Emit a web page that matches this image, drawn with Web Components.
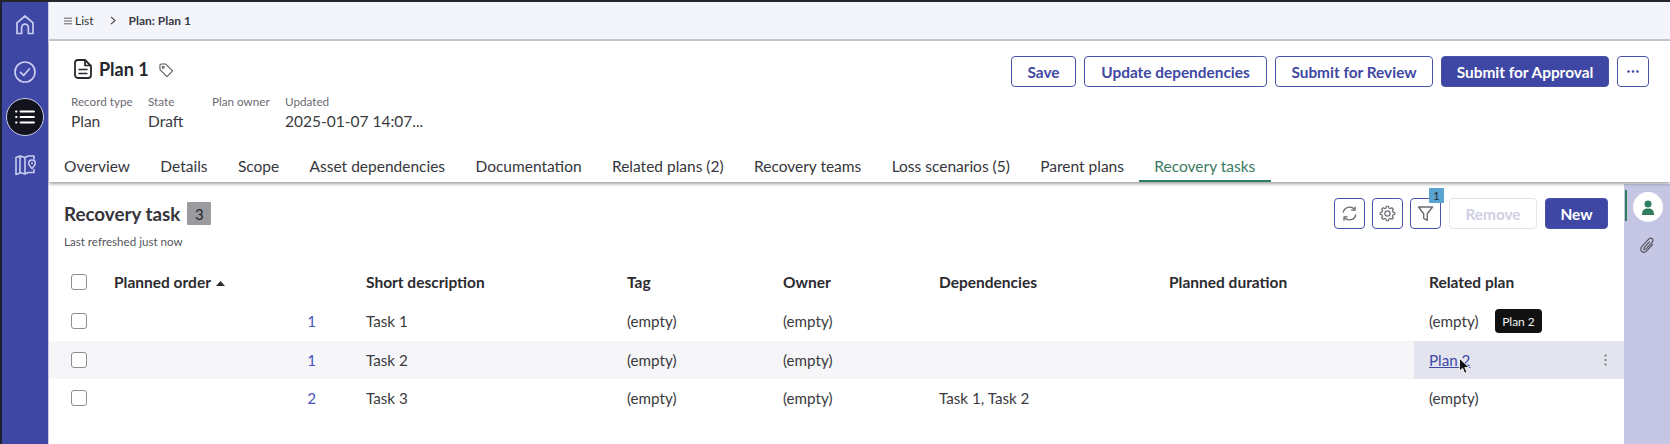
<!DOCTYPE html>
<html><head><meta charset="utf-8"><title>Plan 1</title>
<style>
html,body{margin:0;padding:0;height:444px;overflow:hidden;background:#fff}
body{font-family:Lato,"Liberation Sans",sans-serif;color:#2b2b30}
</style></head><body>
<app-shell>
<side-nav slot="nav"></side-nav>
<crumb-bar slot="main"></crumb-bar>
<record-header slot="main"></record-header>
<task-panel slot="main"></task-panel>
</app-shell>
<script>
function gearPath(cx,cy,R,r,n){let d='';const st=Math.PI*2/n;for(let i=0;i<n;i++){const a=i*st-Math.PI/2;const pts=[[R,a-st*.18],[R,a+st*.18],[r,a+st*.32],[r,a+st*.68]];pts.forEach(([q,t],j)=>{d+=(i===0&&j===0?'M':'L')+(cx+q*Math.cos(t)).toFixed(2)+' '+(cy+q*Math.sin(t)).toFixed(2)});}return d+'z';}
const ICON={
home:'<path d="M5 21.500V10.800L13 4l8 6.800v10.700h-4.600v-6a3.400 3.400 0 0 0-6.800 0v6z" fill="none" stroke="currentColor" stroke-width="1.700" stroke-linejoin="round"/>',
check:'<circle cx="13" cy="13" r="10" fill="none" stroke="currentColor" stroke-width="1.700"/><path d="M8.500 13.400l3.200 3 5.800-6.600" fill="none" stroke="currentColor" stroke-width="1.700" stroke-linecap="round" stroke-linejoin="round"/>',
map:'<path d="M4 5.500l4-1.500v17l-4 1.500zM8 4l5 1.500V22l-5-1.500zM13 5.500L16 4h6v3.500M22 17v3.500h-6L13 22" fill="none" stroke="currentColor" stroke-width="1.600" stroke-linejoin="round"/><path d="M20 16.500c-2.400-2.600-3.300-4-3.300-5.200a3.300 3.300 0 0 1 6.600 0c0 1.200-.9 2.600-3.300 5.200z" fill="none" stroke="currentColor" stroke-width="1.500"/><circle cx="20" cy="11.300" r="1" fill="currentColor"/>',
refresh:'<path d="M3.300 8A6.500 6.500 0 0 1 14.500 5.300" fill="none" stroke="currentColor" stroke-width="1.300" stroke-linecap="round"/><path d="M15 2.800v3.400h-3.300" fill="none" stroke="currentColor" stroke-width="1.300" stroke-linecap="round" stroke-linejoin="round"/><path d="M15.700 11A6.500 6.500 0 0 1 4.500 13.700" fill="none" stroke="currentColor" stroke-width="1.300" stroke-linecap="round"/><path d="M4 16.200v-3.400h3.300" fill="none" stroke="currentColor" stroke-width="1.300" stroke-linecap="round" stroke-linejoin="round"/>',
gear:`<path d="${gearPath(9.5,9.5,7.3,5.700,8)}" fill="none" stroke="currentColor" stroke-width="1.200" stroke-linejoin="round"/><circle cx="9.500" cy="9.500" r="2.600" fill="none" stroke="currentColor" stroke-width="1.200"/>`,
funnel:'<path d="M2.500 3h14l-5.200 6.800v6.500l-3.600-2V9.800z" fill="none" stroke="currentColor" stroke-width="1.400" stroke-linejoin="round"/>'
};
const svg=(n,w,h,vb)=>`<svg width="${w}" height="${h}" viewBox="${vb}" aria-hidden="true">${ICON[n]}</svg>`;
function def(name,html){
 customElements.define(name,class extends HTMLElement{
  constructor(){super();this.attachShadow({mode:'open'}).innerHTML=html;}
 });
}
def('app-shell',`<style>
:host{display:flex;width:1670px;height:444px;border-top:2px solid #24252b;box-sizing:border-box;overflow:hidden}
.main{flex:1;display:flex;flex-direction:column;min-width:0;border-left:1px solid #c9cbe8}
</style><slot name="nav"></slot><div class="main"><slot name="main"></slot></div>`);

def('side-nav',`<style>
:host{display:flex;flex-direction:column;align-items:center;width:48px;box-sizing:border-box;border-left:2px solid #1d1f33;background:#3e47a4;color:#c9cdf0;padding-top:10px;flex:none}
.i{height:26px;display:flex;align-items:center;justify-content:center}
.c{margin-top:21px}
.sel{width:38px;height:38px;margin-top:13px;border-radius:50%;background:#12131c;border:1px solid #c8cbe6;box-sizing:border-box}
.m{margin-top:16px}
</style>
<div class="i">${svg('home',26,26,'0 0 26 26')}</div>
<div class="i c">${svg('check',26,26,'0 0 26 26')}</div>
<div class="i sel"><svg width="20" height="14" viewBox="0 0 20 14" fill="none" stroke="#fff" stroke-width="1.800" stroke-linecap="round"><path d="M1 1.500h.6M5.500 1.500H19M1 7h.6M5.500 7H19M1 12.500h.6M5.500 12.500H19"/></svg></div>
<div class="i m">${svg('map',26,26,'0 0 26 26')}</div>`);

def('crumb-bar',`<style>
:host{display:flex;align-items:center;height:39px;box-sizing:border-box;padding:0 0 0 15px;background:#f4f5fa;font-size:12px;font-weight:700;color:#3a3a42;flex:none;border-bottom:2px solid #c6c7cc}
svg{margin-right:3px}
.l{font-weight:400;color:#333}.c{margin:0 13px 0 16px}
</style><svg width="8" height="8" viewBox="0 0 8 8" stroke="#555" stroke-width=".9" fill="none"><path d="M0 1.200h8M0 4h8M0 6.800h8"/></svg><span class="l">List</span>
<svg class="c" width="6" height="9" viewBox="0 0 6 9" fill="none" stroke="#444" stroke-width="1.100"><path d="M1 .8l4 3.700-4 3.700"/></svg><span>Plan: Plan 1</span>`);

def('action-btn',`<style>
:host{display:inline-flex;align-items:center;justify-content:center;height:31px;box-sizing:border-box;border:1px solid #4a52a8;border-radius:4px;background:#fff;color:#3f48a3;font-size:15.400px;font-weight:700;flex:none;white-space:nowrap}
:host([primary]){background:#3e47a4;color:#fff}
:host([disabled]){color:#cfd0e4;border-color:#e3e4f0}
</style><slot></slot>`);

def('tab-strip',`<style>
:host{display:flex;flex:none}
</style><slot></slot>`);
def('tab-item',`<style>
:host{display:flex;align-items:center;height:31px;padding:0 15.200px;box-sizing:border-box;font-size:15.500px;color:#36363c;border-bottom:2px solid transparent;white-space:nowrap}
:host([active]){color:#3a7a62;border-bottom-color:#2f7d5d}
</style><slot></slot>`);

def('meta-field',`<style>
:host{display:block;flex:none}
.k{font-size:11.700px;color:#6b6b72;line-height:16px;height:16px}
.v{font-size:15.500px;color:#3a3a40;line-height:20px;margin-top:2px;white-space:nowrap;height:20px}
</style><div class="k"><slot name="k"></slot></div><div class="v"><slot name="v"></slot></div>`);

def('record-header',`<style>
:host{display:block;background:#fff;box-shadow:0 2px 3px rgba(90,90,100,.55);position:relative;z-index:2;flex:none;height:141px;box-sizing:border-box}
.top{display:flex;justify-content:space-between;align-items:flex-start;padding:15px 21px 0 0;height:46px;box-sizing:border-box}
.title{display:flex;align-items:center;padding:0 0 0 25px;font-size:18px;font-weight:700;color:#26262c;height:26px}
.title svg:first-child{margin-right:7px}
.title svg:last-child{margin-left:10px;margin-top:3px}
.acts{display:flex;gap:8px}
.meta{display:flex;padding-left:22px;margin-top:6px;height:45px}
.tabs{margin:13px 0 0 -.2px}
</style>
<div class="top">
 <div class="title"><svg width="18" height="20" viewBox="0 0 18 20" fill="none" stroke="#26262c" stroke-width="1.800" stroke-linejoin="round"><path d="M1 4a3 3 0 0 1 3-3h7l6 6v9a3 3 0 0 1-3 3H4a3 3 0 0 1-3-3z"/><path d="M11 1.500V6.500h5.500M4.500 10.500h9M4.500 14.500h9" stroke-width="1.700"/></svg><span>Plan 1</span>
 <svg width="15" height="15" viewBox="0 0 16 16" fill="none" stroke="#55555c" stroke-width="1.100" stroke-linejoin="round"><path d="M1 2.500A1.500 1.500 0 0 1 2.500 1H7l7.500 7.500-6 6L1 7z"/><circle cx="4.500" cy="4.500" r="1.100"/></svg></div>
 <div class="acts"><action-btn style="width:65px">Save</action-btn><action-btn style="width:183px">Update dependencies</action-btn><action-btn style="width:158px">Submit for Review</action-btn><action-btn primary style="width:168px">Submit for Approval</action-btn><action-btn style="width:32px"><svg width="12" height="3" viewBox="0 0 12 3" fill="#3f48a3"><circle cx="1.500" cy="1.500" r="1.300"/><circle cx="6" cy="1.500" r="1.300"/><circle cx="10.500" cy="1.500" r="1.300"/></svg></action-btn></div>
</div>
<div class="meta">
 <meta-field style="width:77px"><span slot="k">Record type</span><span slot="v">Plan</span></meta-field>
 <meta-field style="width:64px"><span slot="k">State</span><span slot="v">Draft</span></meta-field>
 <meta-field style="width:73px"><span slot="k">Plan owner</span></meta-field>
 <meta-field><span slot="k">Updated</span><span slot="v">2025-01-07 14:07...</span></meta-field>
</div>
<tab-strip class="tabs"><tab-item>Overview</tab-item><tab-item>Details</tab-item><tab-item>Scope</tab-item><tab-item>Asset dependencies</tab-item><tab-item>Documentation</tab-item><tab-item>Related plans (2)</tab-item><tab-item>Recovery teams</tab-item><tab-item>Loss scenarios (5)</tab-item><tab-item>Parent plans</tab-item><tab-item active>Recovery tasks</tab-item></tab-strip>`);

def('icon-btn',`<style>
:host{display:flex;align-items:center;justify-content:center;width:31px;height:31px;box-sizing:border-box;border:1px solid #4a52a8;border-radius:4px;color:#6a6a72;position:relative;flex:none;background:#fff}
</style><slot></slot>`);
def('count-badge',`<style>
:host{position:absolute;top:-11px;right:-4px;width:15px;height:15px;background:#5aa2cf;color:#1f2a33;font-size:11px;line-height:15px;text-align:center;border-radius:1px}
</style><slot></slot>`);

def('check-box',`<style>
:host{display:block;width:16px;height:16px;box-sizing:border-box;border:1.500px solid #8d8d94;border-radius:3px;background:#fff}
</style>`);

def('task-row',`<style>
:host{display:grid;grid-template-columns:65px 252px 261px 156px 156px 230px 260px 195px;height:38.300px;align-items:center;font-size:15.200px;color:#3a3a40;position:relative}
:host([head]){font-weight:700;color:#2b2b30;font-size:15.500px;margin-bottom:1px}
:host([hover]){background:linear-gradient(90deg,#f6f6f9 0,#f6f6f9 1365px,#e3e4ee 1365px)}
::slotted(check-box){margin-left:22px}
::slotted(.num){text-align:right;padding-right:50px;color:#4a52bd}
</style><slot></slot>`);

def('task-panel',`<style>
:host{display:flex;flex:1;min-height:0;background:#fff}
.list{flex:1;min-width:0;position:relative}
.rail{width:46px;flex:none;background:#c5c6e3;position:relative;display:flex;flex-direction:column;align-items:center;padding-top:8px;box-sizing:border-box;margin-top:2px}
.rail::before{content:"";position:absolute;left:1px;top:6px;width:2px;height:31px;background:#2f7d5d}
.who{width:30px;height:30px;border-radius:50%;background:#fff;display:flex;align-items:center;justify-content:center;margin-left:2px}
.clip{margin-top:14px}
.head{display:flex;justify-content:space-between;padding:16px 16px 0 15px;height:81px;box-sizing:border-box}
.t{display:flex;align-items:center;gap:7px;font-size:18.800px;font-weight:700;color:#35353b;height:23px;margin-top:4px}
.badge{width:24px;height:23px;background:#9a9a9f;color:#26262c;font-size:15px;font-weight:400;display:flex;align-items:center;justify-content:center;border-radius:1px}
.sub{font-size:11.600px;color:#55555c;margin-top:10px;line-height:14px}
.tools{display:flex;gap:7px}
.tools action-btn{margin-left:1px}
.rows{position:relative}
.kebab{position:absolute;right:17px;top:13px;display:block}
.tip{position:absolute;left:1446px;top:46px;width:47px;height:24px;background:#111;color:#f2f2f2;font-size:12px;border-radius:4px;display:flex;align-items:center;justify-content:center}
.link{color:#3f48a8;text-decoration:underline}
.cursor{position:absolute;left:1409px;top:94px;z-index:3}
</style>
<div class="list">
 <div class="head"><div><div class="t"><span>Recovery task</span><span class="badge">3</span></div><div class="sub">Last refreshed just now</div></div>
  <div class="tools">
   <icon-btn>${svg('refresh',19,19,'0 0 19 19')}</icon-btn>
   <icon-btn>${svg('gear',19,19,'0 0 19 19')}</icon-btn>
   <icon-btn>${svg('funnel',19,19,'0 0 19 19')}<count-badge>1</count-badge></icon-btn>
   <action-btn disabled style="width:88px">Remove</action-btn>
   <action-btn primary style="width:63px">New</action-btn>
  </div></div>
 <div class="rows">
  <task-row head><check-box></check-box><span>Planned order <svg width="9" height="5" viewBox="0 0 9 5" style="margin:0 0 2px 2px"><path d="M4.500 0L9 5H0z" fill="#2b2b30"/></svg></span><span>Short description</span><span>Tag</span><span>Owner</span><span>Dependencies</span><span>Planned duration</span><span>Related plan</span></task-row>
  <task-row><check-box></check-box><span class="num">1</span><span>Task 1</span><span>(empty)</span><span>(empty)</span><span></span><span></span><span>(empty)</span></task-row>
  <task-row hover><check-box></check-box><span class="num">1</span><span>Task 2</span><span>(empty)</span><span>(empty)</span><span></span><span></span><span class="link">Plan 2</span><svg class="kebab" width="3" height="12" viewBox="0 0 3 12" fill="#77777f"><circle cx="1.500" cy="1.500" r="1.100"/><circle cx="1.500" cy="6" r="1.100"/><circle cx="1.500" cy="10.500" r="1.100"/></svg></task-row>
  <task-row><check-box></check-box><span class="num">2</span><span>Task 3</span><span>(empty)</span><span>(empty)</span><span>Task 1, Task 2</span><span></span><span>(empty)</span></task-row>
  <div class="tip">Plan 2</div>
  <svg class="cursor" width="13" height="18" viewBox="0 0 11 16"><path d="M1 1v11.500l2.800-2.500 1.900 4.500 2-.9-1.900-4.300h3.700z" fill="#111" stroke="#fff" stroke-width=".8"/></svg>
 </div>
</div>
<div class="rail"><div class="who"><svg width="12" height="15" viewBox="0 0 12 15" fill="#2f7d5d"><circle cx="6" cy="4" r="3.500"/><path d="M0 15c0-5 2-6.500 6-6.500s6 1.500 6 6.500z"/></svg></div>
<svg class="clip" width="16" height="18" viewBox="0 0 16 18" fill="none" stroke="#55555e" stroke-width="1.200" stroke-linecap="round"><path d="M13.500 8.500l-5.800 6.300c-1.500 1.600-3.700 1.700-5 .5s-1.200-3.300.3-4.900l6.700-7.300c1-1.100 2.500-1.200 3.500-.3s.9 2.400-.1 3.500l-6.300 6.800c-.5.500-1.200.6-1.700.2s-.4-1.200.1-1.700l5.300-5.800"/></svg></div>`);
</script>
</body></html>
